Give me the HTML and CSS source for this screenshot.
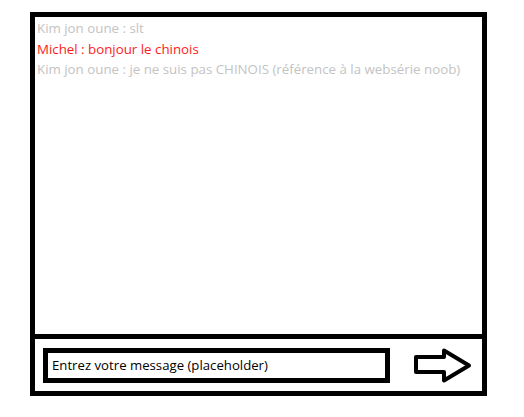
FILE: index.html
```html
<!DOCTYPE html>
<html lang="fr">
<head>
<meta charset="utf-8">
<link rel="stylesheet" href="styles.css">
</head>
<body>
<div class="chat">
  <div class="messages">
    <div class="msg other">Kim jon oune : slt</div>
    <div class="msg me">Michel : bonjour le chinois</div>
    <div class="msg other">Kim jon oune : je ne suis pas CHINOIS (référence à la websérie noob)</div>
  </div>
  <div class="composer">
    <div class="input">Entrez votre message (placeholder)</div>
    <svg class="send" width="62" height="40" viewBox="0 0 62 40">
      <polygon points="4,12 32,12 32,5.5 57,20.5 32,35.5 32,27 4,27" fill="#fff" stroke="#000" stroke-width="4" stroke-linejoin="round"/>
    </svg>
  </div>
</div>
</body>
</html>
```
FILE: styles.css
```css
html, body {
  margin: 0;
  background: #fff;
}
body {
  padding: 12px 0 0 30px;
  font-family: "Open Sans", "Noto Sans", sans-serif;
}
.chat {
  box-sizing: border-box;
  width: 457px;
  height: 384px;
  border: 5px solid #000;
  display: flex;
  flex-direction: column;
}
.messages {
  flex: 1;
  padding: 1px 0 0 2px;
}
.msg {
  font-size: 13.3px;
  line-height: 20.5px;
  white-space: nowrap;
}
.other { color: #c3c3c3; }
.me { color: #ff1a1a; }
.composer {
  height: 52px;
  border-top: 5px solid #000;
  display: flex;
  align-items: center;
  padding-left: 8px;
  gap: 22px;
}
.input {
  box-sizing: border-box;
  width: 347px;
  height: 35px;
  border: 5px solid #000;
  padding-left: 4px;
  display: flex;
  align-items: center;
  font-size: 13.2px;
  color: #000;
}
.send { display: block; }
```
